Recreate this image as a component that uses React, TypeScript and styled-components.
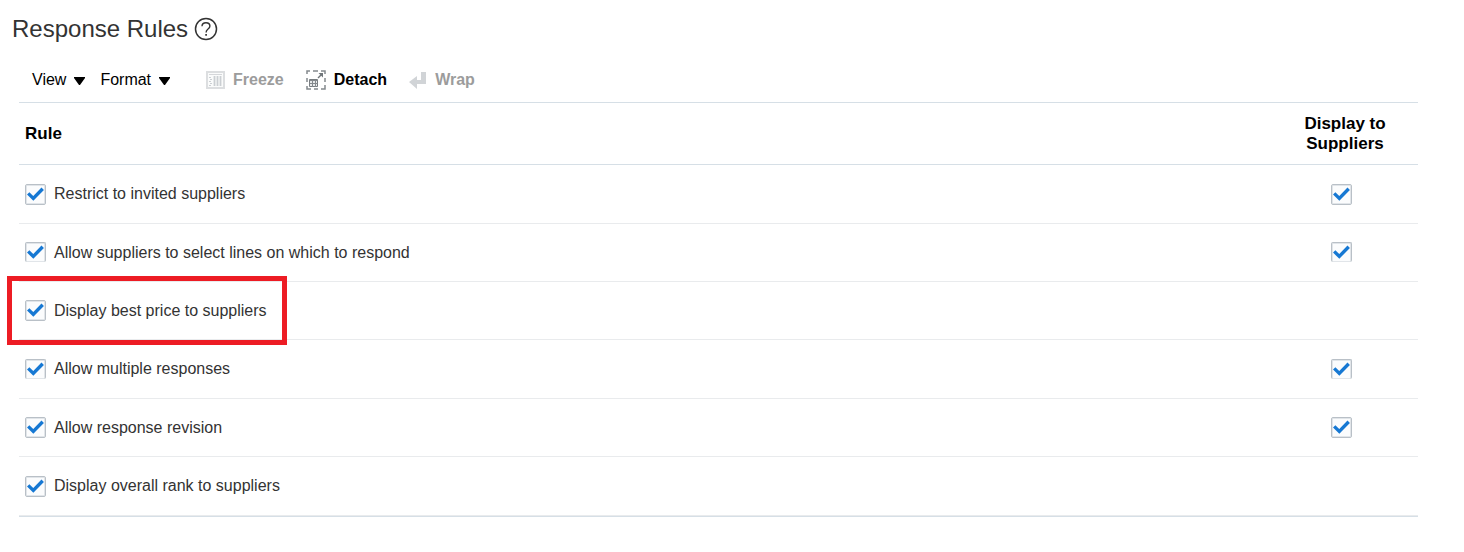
import React from "react";
import styled, { createGlobalStyle } from "styled-components";

const GlobalStyle = createGlobalStyle`
  *, *::before, *::after { box-sizing: border-box; }
  body {
    margin: 0;
    background: #fff;
    color: #333;
    font: 16px/20px "Liberation Sans", Arial, sans-serif;
  }
`;

const Page = styled.main`
  padding: 12px 46px 32px 12px;
`;

const TitleBar = styled.header`
  display: flex;
  align-items: center;
  gap: 6px;
  height: 34px;
`;

const Title = styled.h1`
  margin: 0;
  font-size: 24px;
  line-height: 32px;
  font-weight: 400;
`;

const HelpButton = styled.button`
  display: flex;
  padding: 0;
  border: 0;
  background: none;
  color: #333;
`;

const Panel = styled.section`
  margin-left: 7px;
`;

const Toolbar = styled.div`
  display: flex;
  align-items: center;
  height: 56px;
  padding: 12px 0 0 13px;
`;

const ToolGroup = styled.div<{ $gap: number }>`
  display: flex;
  align-items: center;
  gap: ${(p) => p.$gap}px;
  & + & {
    margin-left: 36px;
  }
`;

const ToolButton = styled.button<{ $strong?: boolean }>`
  display: flex;
  align-items: center;
  gap: 8px;
  padding: 0;
  border: 0;
  background: none;
  color: #000;
  font: inherit;
  font-weight: ${(p) => (p.$strong ? 700 : 400)};
  white-space: nowrap;
  &:disabled {
    color: #9c9c9c;
  }
`;

const RuleTable = styled.table`
  width: 100%;
  table-layout: fixed;
  border-spacing: 0;
  border-top: 1px solid #d6dfe6;
  border-bottom: 1px solid #d6dfe6;
`;

const HeadCell = styled.th<{ $center?: boolean }>`
  height: 62px;
  padding: 0 6px;
  width: ${(p) => (p.$center ? "146px" : "auto")};
  border-bottom: 1px solid #d6dfe6;
  color: #000;
  font-size: 17px;
  font-weight: 700;
  text-align: ${(p) => (p.$center ? "center" : "left")};
`;

const BodyRow = styled.tr`
  height: 58px;
  &:nth-child(3n + 1) {
    height: 59px;
  }
  &:last-child {
    height: 59px;
  }
`;

const Cell = styled.td<{ $center?: boolean }>`
  position: relative;
  padding: ${(p) => (p.$center ? "0 7px 0 0" : "0 6px")};
  border-bottom: 1px solid #e9ebed;
  text-align: ${(p) => (p.$center ? "center" : "left")};
  vertical-align: middle;
`;

const RuleLabel = styled.label`
  display: flex;
  align-items: center;
  gap: 8px;
`;

const CheckFrame = styled.span`
  display: inline-grid;
  height: 21px;
  vertical-align: middle;
  & > * {
    grid-area: 1 / 1;
  }
  & > svg {
    pointer-events: none;
    visibility: hidden;
  }
  & > input:checked + svg {
    visibility: visible;
  }
`;

const CheckInput = styled.input<{ $open?: boolean }>`
  appearance: none;
  width: 21px;
  height: ${(p) => (p.$open ? 20 : 21)}px;
  margin: 0;
  border: 1px solid #b9c0c7;
  border-bottom-width: ${(p) => (p.$open ? 0 : 1)}px;
  border-radius: 2px;
  background: #fbfcfd;
  box-shadow: inset 0 0 0 1px #e1e5e9;
`;

const Highlight = styled.div`
  position: absolute;
  top: -6px;
  left: -12px;
  width: 280px;
  height: 69px;
  border: 5px solid #ed1c24;
  pointer-events: none;
`;

const HelpIcon = () => (
  <svg width="24" height="24" viewBox="0 0 24 24" fill="none" stroke="currentColor" aria-hidden="true">
    <circle cx="12" cy="12" r="10.5" strokeWidth="1.5" />
    <path d="M8 9.2C8.1 7 9.7 5.7 12 5.7s3.9 1.3 3.9 3.2c0 1.7-1 2.4-2.1 3.3-1.2.9-1.7 1.6-1.7 3.2" strokeWidth="1.4" />
    <path d="M12.1 17v1.8" strokeWidth="1.7" />
  </svg>
);

const Caret = () => (
  <svg width="11" height="20" viewBox="0 0 11 20" aria-hidden="true">
    <path d="M0 7h11v1L6 15H5L0 8z" fill="#000" />
  </svg>
);

const FreezeIcon = () => (
  <svg width="19" height="20" viewBox="0 0 19 20" fill="none" aria-hidden="true">
    <rect x="1" y="2" width="17" height="16" fill="#fafbfb" stroke="#dcdee0" strokeWidth="2" />
    <path d="M3 4.5h13" stroke="#d5d7da" />
    <path d="M3 7.5h2M4 9.5h2M3 11.5h2M4 13.5h2M3 15.5h2" stroke="#cbcfd3" />
    <path d="M8.5 6v10M11.5 6v10M14.5 6v10" stroke="#cbcfd3" strokeWidth="1.8" />
  </svg>
);

const DetachIcon = () => (
  <svg width="20" height="20" viewBox="0 0 20 20" fill="none" aria-hidden="true">
    <path d="M1 4V1h3M7 1h5M15 1h4v3M19 8v4M19 15v4h-4M12 19H8M5 19H1v-3M1 12V8" stroke="#84898d" strokeWidth="1.5" />
    <path d="M3.5 9.5h8v7h-8z" fill="#e7e9ea" stroke="#777c80" />
    <path d="M3.5 10.5h8M3.5 13.5h8M6.5 10v7M9.5 10v7" stroke="#84898d" />
    <path d="M12 8l4-4" stroke="#70767a" strokeWidth="1.5" />
    <path d="M12.5 3H17v4.5z" fill="#70767a" />
  </svg>
);

const WrapIcon = () => (
  <svg width="18" height="20" viewBox="0 0 18 20" aria-hidden="true">
    <path d="M12 2h5v12H8v5l-8-7 8-6v4h4z" fill="#d1d4d7" />
  </svg>
);

const Tick = () => (
  <svg width="21" height="21" viewBox="0 0 21 21" fill="none" aria-hidden="true">
    <path d="M3.2 9.4l5.1 5L17.7 4.7" stroke="#1678d3" strokeWidth="3.4" />
  </svg>
);

interface CheckProps {
  open?: boolean;
  id?: string;
  label?: string;
}

const Check = ({ open, id, label }: CheckProps) => (
  <CheckFrame>
    <CheckInput type="checkbox" defaultChecked $open={open} id={id} aria-label={label} />
    <Tick />
  </CheckFrame>
);

interface Rule {
  name: string;
  shown: boolean;
  open?: boolean;
  highlighted?: boolean;
}

const rules: Rule[] = [
  { name: "Restrict to invited suppliers", shown: true },
  { name: "Allow suppliers to select lines on which to respond", shown: true, open: true },
  { name: "Display best price to suppliers", shown: false, highlighted: true },
  { name: "Allow multiple responses", shown: true, open: true },
  { name: "Allow response revision", shown: true },
  { name: "Display overall rank to suppliers", shown: false },
];

export default function App() {
  return (
    <>
      <GlobalStyle />
      <Page>
        <TitleBar>
          <Title>Response Rules</Title>
          <HelpButton type="button" aria-label="Help">
            <HelpIcon />
          </HelpButton>
        </TitleBar>
        <Panel>
          <Toolbar>
            <ToolGroup $gap={15}>
              <ToolButton type="button">View<Caret /></ToolButton>
              <ToolButton type="button">Format<Caret /></ToolButton>
            </ToolGroup>
            <ToolGroup $gap={22}>
              <ToolButton type="button" $strong disabled><FreezeIcon />Freeze</ToolButton>
              <ToolButton type="button" $strong><DetachIcon />Detach</ToolButton>
              <ToolButton type="button" $strong disabled><WrapIcon />Wrap</ToolButton>
            </ToolGroup>
          </Toolbar>
          <RuleTable>
            <thead>
              <tr>
                <HeadCell scope="col">Rule</HeadCell>
                <HeadCell scope="col" $center>Display to<br />Suppliers</HeadCell>
              </tr>
            </thead>
            <tbody>
              {rules.map((rule, i) => (
                <BodyRow key={rule.name}>
                  <Cell>
                    <RuleLabel htmlFor={`rule-${i}`}>
                      <Check id={`rule-${i}`} open={rule.open} />
                      {rule.name}
                    </RuleLabel>
                    {rule.highlighted && <Highlight />}
                  </Cell>
                  <Cell $center>
                    {rule.shown && <Check open={rule.open} label={`Display to suppliers: ${rule.name}`} />}
                  </Cell>
                </BodyRow>
              ))}
            </tbody>
          </RuleTable>
        </Panel>
      </Page>
    </>
  );
}
